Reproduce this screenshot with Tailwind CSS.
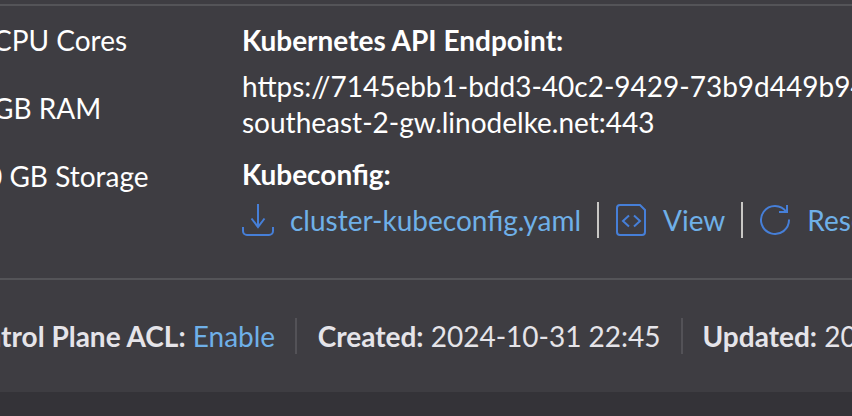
<!DOCTYPE html>
<html lang="en"><head><meta charset="utf-8"><title>Cluster summary</title><script src="https://cdn.jsdelivr.net/npm/@tailwindcss/browser@4"></script></head>
<body class="w-[852px] h-[416px] overflow-hidden bg-[#343338] font-['Lato',sans-serif] text-[28px] leading-[36px] text-white whitespace-nowrap antialiased">
<main class="h-[392px] bg-[#3e3d42] overflow-hidden flex flex-col">
<div class="h-[4px] shrink-0"></div>
<section class="h-[276px] shrink-0 border-y-2 border-[#545458] flex">
<ul class="w-[242px] shrink-0 pt-4 flex flex-col gap-8">
<li class="-ml-[7px]">CPU Cores</li><li class="-ml-[7px]">GB RAM</li><li class="-ml-[14px]">0 GB Storage</li>
</ul>
<div class="pt-4">
<h3 class="font-bold">Kubernetes API Endpoint:</h3>
<p class="mt-[10px]">https://7145ebb1-bdd3-40c2-9429-73b9d449b94<br>southeast-2-gw.linodelke.net:443</p>
<h3 class="font-bold mt-4">Kubeconfig:</h3>
<div class="mt-[10px] flex items-center text-[#6fb0e8]">
<svg class="w-8 h-8 mr-4" viewBox="0 0 32 32" fill="none" stroke="#467fd8" stroke-width="2"><path d="M16 0v23M9.500 14.500l6.500 8.500 6.500-8.500M1 23v4a4 4 0 0 0 4 4h22a4 4 0 0 0 4-4v-4"/></svg>
<a>cluster-kubeconfig.yaml</a><span class="w-[2px] shrink-0 h-9 bg-[#c9c8c5] mx-4"></span>
<svg class="w-8 h-8 mr-4" viewBox="0 0 32 32" fill="none" stroke="#467fd8" stroke-width="2"><path d="M5 1h20l5 5v22a3 3 0 0 1-3 3H5a3 3 0 0 1-3-3V4a3 3 0 0 1 3-3z"/><path d="M14 11.500l-6 5.500 6 5.500M19 11.500l6 5.500-6 5.500"/></svg>
<a>View</a><span class="w-[2px] shrink-0 h-9 bg-[#c9c8c5] mx-4"></span>
<svg class="w-8 h-8 mr-4" viewBox="0 0 32 32" fill="none" stroke="#467fd8" stroke-width="2"><path d="M30 15.500A14 14 0 1 1 27.500 8M28 1v7h-8"/></svg>
<a>Reset</a>
</div></div></section>
<footer class="flex pt-[38px] text-[#e5e4e9]">
<span class="-ml-[14.5px] shrink-0"><b>ntrol Plane ACL:</b> <a class="text-[#6fb0e8]">Enable</a></span><span class="w-[2px] shrink-0 h-9 bg-[#535257] ml-[19.5px] mr-[21px]"></span>
<span class="shrink-0"><b>Created:</b> 2024-10-31 22:45</span><span class="w-[2px] shrink-0 h-9 bg-[#535257] mx-5"></span><span class="shrink-0"><b>Updated:</b> 2024-10-31</span>
</footer>
</main></body></html>
